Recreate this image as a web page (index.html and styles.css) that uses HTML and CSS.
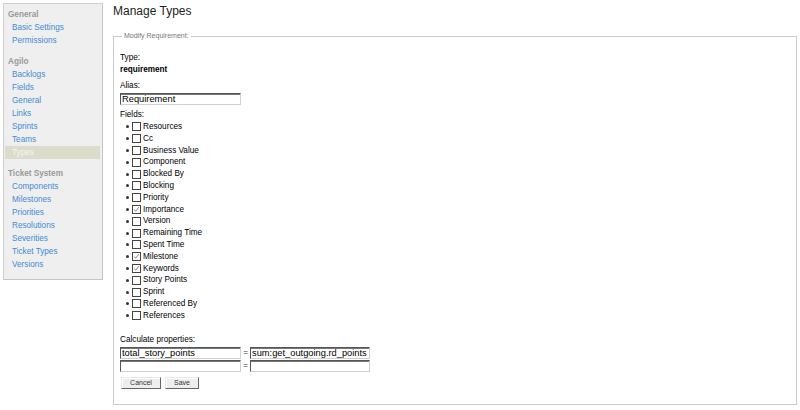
FILE: index.html
```html
<!DOCTYPE html>
<html>
<head>
<meta charset="utf-8">
<link rel="stylesheet" href="styles.css">
</head>
<body>
<div class="page">
  <div class="sidebar">
    <div class="group">
      <div class="ghead">General</div>
      <a class="item" href="#">Basic Settings</a>
      <a class="item" href="#">Permissions</a>
    </div>
    <div class="group">
      <div class="ghead">Agilo</div>
      <a class="item" href="#">Backlogs</a>
      <a class="item" href="#">Fields</a>
      <a class="item" href="#">General</a>
      <a class="item" href="#">Links</a>
      <a class="item" href="#">Sprints</a>
      <a class="item" href="#">Teams</a>
      <a class="item active" href="#">Types</a>
    </div>
    <div class="group">
      <div class="ghead">Ticket System</div>
      <a class="item" href="#">Components</a>
      <a class="item" href="#">Milestones</a>
      <a class="item" href="#">Priorities</a>
      <a class="item" href="#">Resolutions</a>
      <a class="item" href="#">Severities</a>
      <a class="item" href="#">Ticket Types</a>
      <a class="item" href="#">Versions</a>
    </div>
  </div>
  <div class="main">
    <h1 class="title">Manage Types</h1>
    <fieldset class="box">
      <legend class="legend">Modify Requirement:</legend>
      <div class="label first">Type:</div>
      <div class="label strong">requirement</div>
      <div class="label gap">Alias:</div>
      <input class="field alias" type="text" value="Requirement">
      <div class="label gap">Fields:</div>
      <ul class="fields">
        <li><span class="cb"></span>Resources</li>
        <li><span class="cb"></span>Cc</li>
        <li><span class="cb"></span>Business Value</li>
        <li><span class="cb"></span>Component</li>
        <li><span class="cb"></span>Blocked By</li>
        <li><span class="cb"></span>Blocking</li>
        <li><span class="cb"></span>Priority</li>
        <li><span class="cb"><svg viewBox="0 0 9 9" width="7" height="7"><path d="M1.5 4.5 L3.5 6.8 L7.5 1.5" fill="none" stroke="#555" stroke-width="0.9"/></svg></span>Importance</li>
        <li><span class="cb"></span>Version</li>
        <li><span class="cb"></span>Remaining Time</li>
        <li><span class="cb"></span>Spent Time</li>
        <li><span class="cb"><svg viewBox="0 0 9 9" width="7" height="7"><path d="M1.5 4.5 L3.5 6.8 L7.5 1.5" fill="none" stroke="#555" stroke-width="0.9"/></svg></span>Milestone</li>
        <li><span class="cb"><svg viewBox="0 0 9 9" width="7" height="7"><path d="M1.5 4.5 L3.5 6.8 L7.5 1.5" fill="none" stroke="#555" stroke-width="0.9"/></svg></span>Keywords</li>
        <li><span class="cb"></span>Story Points</li>
        <li><span class="cb"></span>Sprint</li>
        <li><span class="cb"></span>Referenced By</li>
        <li><span class="cb"></span>References</li>
      </ul>
      <div class="label calc">Calculate properties:</div>
      <div class="calcrow">
        <input class="field" type="text" value="total_story_points"><span class="eq">=</span><input class="field" type="text" value="sum:get_outgoing.rd_points">
      </div>
      <div class="calcrow">
        <input class="field" type="text" value=""><span class="eq">=</span><input class="field" type="text" value="">
      </div>
      <div class="buttons">
        <button class="btn cancel" type="button">Cancel</button>
        <button class="btn save" type="button">Save</button>
      </div>
    </fieldset>
  </div>
</div>
</body>
</html>
```
FILE: styles.css
```css
html, body {
  margin: 0;
  padding: 0;
  background: #fff;
}
body {
  font-family: "Liberation Sans", Arial, sans-serif;
  font-size: 8.2px;
  color: #000;
}
.page {
  display: flex;
  align-items: flex-start;
  padding: 3px 3px 0 3px;
}
.sidebar {
  width: 98px;
  flex: none;
  background: #efefef;
  border: 1px solid #cfcfcf;
  border-right-color: #c4c4c4;
  border-bottom-color: #c4c4c4;
  padding: 5px 0 8px 0;
}
.group + .group {
  margin-top: 9px;
}
.ghead {
  line-height: 12px;
  height: 12px;
  padding-left: 4px;
  color: #999;
  font-weight: bold;
}
.item {
  display: block;
  line-height: 13px;
  height: 13px;
  padding-left: 8px;
  color: #3f8bd6;
  text-decoration: none;
}
.item.active {
  background: #dcdccb;
  color: #f6f6f0;
  margin: 0 2px 0 1px;
  padding-left: 7px;
}
.main {
  flex: 1;
  margin-left: 10px;
  min-width: 0;
}
.title {
  margin: 1px 0 0 0;
  font-size: 12px;
  line-height: 14px;
  font-weight: normal;
  color: #222;
}
.box {
  margin: 14px 0 0 0;
  border: 1px solid #cacaca;
  padding: 12px 6px 15px 6px;
  min-width: 0;
}
.legend {
  font-size: 7px;
  line-height: 8px;
  color: #777;
  padding: 0 2px;
  margin-left: 2px;
}
.label {
  line-height: 12px;
  height: 12px;
}
.strong {
  font-weight: bold;
}
.label.gap {
  margin-top: 4px;
}
.field {
  display: block;
  box-sizing: border-box;
  width: 121px;
  height: 12px;
  margin: 0;
  padding: 0 1px;
  font-family: "Liberation Sans", Arial, sans-serif;
  font-size: 9.3px;
  line-height: 10px;
  color: #000;
  background: #fff;
  border-style: solid;
  border-width: 1px;
  border-color: #555 #d0d0d0 #d0d0d0 #555;
  box-shadow: inset 0 1px 0 #777;
  outline: none;
}
.field.alias {
  margin-top: 1px;
}
.fields {
  list-style: none;
  margin: 0;
  padding: 0 0 0 6px;
}
.fields li {
  display: flex;
  align-items: center;
  height: 11.8px;
  line-height: 11.8px;
}
.fields li::before {
  content: "";
  width: 3px;
  height: 3px;
  border-radius: 50%;
  background: #333;
  margin-right: 3px;
  flex: none;
}
.cb {
  box-sizing: border-box;
  width: 9px;
  height: 9px;
  border: 1px solid #444;
  background: #fff;
  margin-right: 2px;
  flex: none;
  display: flex;
  align-items: center;
  justify-content: center;
}
.cb svg {
  display: block;
}
.label.calc {
  margin-top: 12px;
}
.calcrow {
  display: flex;
  align-items: center;
  margin-top: 1px;
}
.calcrow .field {
  margin: 0;
}
.calcrow .field + .eq + .field {
  width: 120px;
}
.eq {
  width: 9px;
  text-align: center;
  color: #333;
  font-size: 8px;
}
.buttons {
  display: flex;
  gap: 4px;
  margin-top: 5px;
  padding-left: 1px;
}
.btn {
  box-sizing: border-box;
  height: 12px;
  padding: 0;
  font-family: "Liberation Sans", Arial, sans-serif;
  font-size: 7px;
  line-height: 9px;
  color: #333;
  background: #eeeeee;
  border: 1px solid;
  border-color: #e8e8e8 #666 #666 #e8e8e8;
  box-shadow: inset 1px 1px 0 #fff;
}
.cancel {
  width: 40px;
}
.save {
  width: 34px;
}
```
